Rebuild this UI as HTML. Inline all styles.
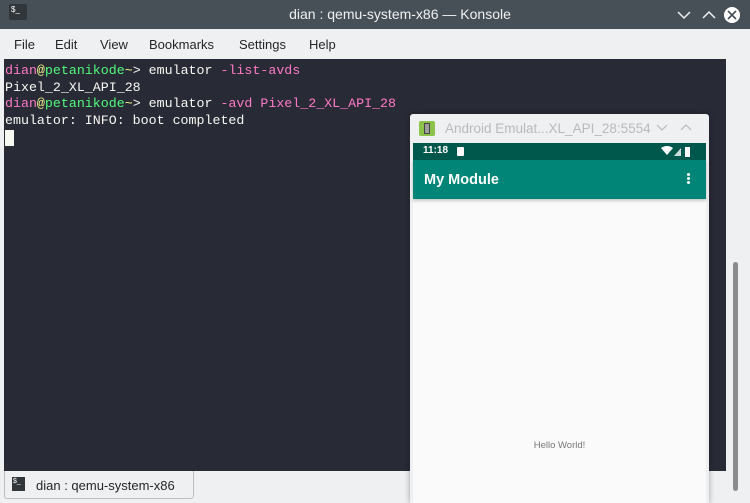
<!DOCTYPE html>
<html><head><style>
body{margin:0;width:750px;height:503px;overflow:hidden;background:#eff0f1;font-family:"Liberation Sans",sans-serif;position:relative}
.tb{position:absolute;left:0;top:0;width:750px;height:29px;background:#475057;color:#eff0f1;font-size:14px}
.menu{position:absolute;top:29px;left:0;width:750px;height:30px;font-size:13px;color:#232627}
.menu span{position:absolute;top:8px}
.term{position:absolute;left:4px;top:59px;width:722px;height:412px;background:#282a36;font-family:"Liberation Mono",monospace;font-size:13.3px;color:#f8f8f2}
.term div{position:absolute;left:1px;white-space:pre}
.p{color:#ff79c6}.g{color:#50fa7b}.y{color:#f1fa8c}
.emu{position:absolute;left:410px;top:114px;width:299px;height:389px;background:#eff0f1;box-shadow:0 0 6px rgba(0,0,0,.35);border-radius:3px 3px 0 0}
</style></head><body>
<div class="tb">
<div style="position:absolute;left:9px;top:4px;width:18px;height:16px;background:#31363b;border-radius:2px;color:#fff;font-size:8px;line-height:12px;padding-left:2px;box-sizing:border-box">$_</div>
<div style="position:absolute;left:0;width:750px;top:6px;text-align:center;padding-left:50px;box-sizing:border-box">dian : qemu-system-x86 — Konsole</div>
<svg style="position:absolute;left:675px;top:7px" width="75" height="18"><path d="M3 5l6 6 6-6" stroke="#eff0f1" stroke-width="1.5" fill="none"/><path d="M28 11l6-6 6 6" stroke="#eff0f1" stroke-width="1.5" fill="none"/><circle cx="57" cy="8" r="8" fill="#fff"/><path d="M53 4l8 8M61 4l-8 8" stroke="#475057" stroke-width="1.6"/></svg>
</div>
<div class="menu"><span style="left:14px">File</span><span style="left:55px">Edit</span><span style="left:100px">View</span><span style="left:149px">Bookmarks</span><span style="left:239px">Settings</span><span style="left:309px">Help</span></div>
<div class="term">
<div style="top:4px"><span class="p">dian</span><span class="y">@</span><span class="g">petanikode</span><span class="y">~</span>&gt; emulator <span class="p">-list-avds</span></div>
<div style="top:21px">Pixel_2_XL_API_28</div>
<div style="top:37px"><span class="p">dian</span><span class="y">@</span><span class="g">petanikode</span><span class="y">~</span>&gt; emulator <span class="p">-avd Pixel_2_XL_API_28</span></div>
<div style="top:54px">emulator: INFO: boot completed</div>
<div style="top:71px;width:9px;height:16px;background:#f8f8f2"></div>
</div>
<div style="position:absolute;left:733px;top:262px;width:5px;height:229px;background:#8a8d90;border-radius:3px"></div>
<div style="position:absolute;left:4px;top:471px;width:188px;height:27px;background:#eff0f1;border:1px solid #bcbebf;border-top:none;border-radius:0 0 3px 3px;font-size:13px;color:#232627">
<div style="position:absolute;left:7px;top:6px;width:12px;height:14px;background:#31363b;color:#fff;font-size:7px;line-height:10px;padding-left:1px">$_</div>
<div style="position:absolute;left:31px;top:7px">dian : qemu-system-x86</div></div>
<div class="emu">
<div style="position:absolute;left:9px;top:7px;width:16px;height:15px;background:#8bc34a;border-radius:2px"><div style="position:absolute;left:5px;top:2px;width:6px;height:11px;border:1px solid #444;box-sizing:border-box;background:#9e9e9e"></div></div>
<div style="position:absolute;left:35px;top:7px;font-size:13.5px;color:#b8babc">Android Emulat...XL_API_28:5554</div>
<svg style="position:absolute;left:245px;top:8px" width="40" height="12"><path d="M2 3l5 5 5-5M26 8l5-5 5 5" stroke="#b8babc" stroke-width="1.2" fill="none"/></svg>
<div style="position:absolute;left:3px;top:29px;width:293px;height:360px;background:#fafafa">
<div style="height:17px;background:#00574b;color:#fff;font-size:10px;font-weight:bold;position:relative"><span style="position:absolute;left:10px;top:2px">11:18</span><div style="position:absolute;left:44px;top:4px;width:7px;height:9px;background:#fff;border-radius:1px"></div>
<svg style="position:absolute;left:248px;top:3px" width="40" height="11"><path d="M0 2q6-4 12 0l-6 7z" fill="#fff"/><path d="M13 10l7-8v8z" fill="#fff" opacity=".8"/><rect x="24" y="1" width="5" height="10" fill="#fff"/></svg></div>
<div style="height:39px;background:#008577;color:#fff;font-size:14.5px;font-weight:bold;position:relative;box-shadow:0 2px 3px rgba(0,0,0,.2)"><span style="position:absolute;left:11px;top:12px">My Module</span>
<div style="position:absolute;right:16px;top:13px;width:3px;height:3px;background:#fff;box-shadow:0 4px #fff,0 8px #fff;border-radius:50%"></div></div>
<div style="position:absolute;left:0;width:293px;top:297px;text-align:center;font-size:9.5px;color:#777">Hello World!</div>
</div></div>
</body></html>
